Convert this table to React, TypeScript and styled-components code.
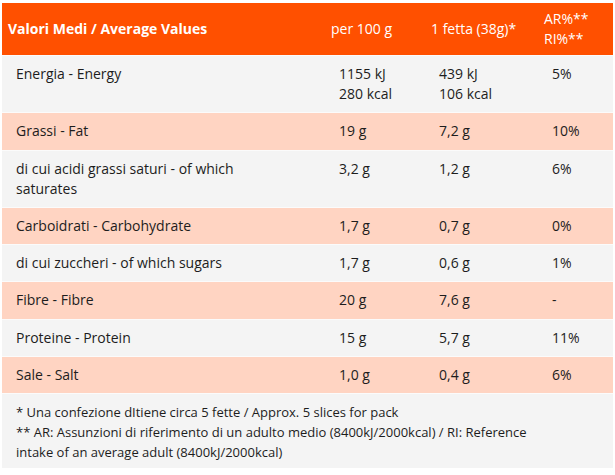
import styled, { createGlobalStyle } from 'styled-components';

const GlobalStyle = createGlobalStyle`
  body {
    margin: 0;
    background: #ffffff;
    font-family: 'Open Sans', 'DejaVu Sans', sans-serif;
    color: #1d1d1d;
  }
`;

interface Row {
  label: string;
  per100: string[];
  slice: string[];
  ar: string;
  tint: boolean;
}

const rows: Row[] = [
  { label: 'Energia - Energy', per100: ['1155 kJ', '280 kcal'], slice: ['439 kJ', '106 kcal'], ar: '5%', tint: false },
  { label: 'Grassi - Fat', per100: ['19 g'], slice: ['7,2 g'], ar: '10%', tint: true },
  { label: 'di cui acidi grassi saturi - of which saturates', per100: ['3,2 g'], slice: ['1,2 g'], ar: '6%', tint: false },
  { label: 'Carboidrati - Carbohydrate', per100: ['1,7 g'], slice: ['0,7 g'], ar: '0%', tint: true },
  { label: 'di cui zuccheri - of which sugars', per100: ['1,7 g'], slice: ['0,6 g'], ar: '1%', tint: false },
  { label: 'Fibre - Fibre', per100: ['20 g'], slice: ['7,6 g'], ar: '-', tint: true },
  { label: 'Proteine - Protein', per100: ['15 g'], slice: ['5,7 g'], ar: '11%', tint: false },
  { label: 'Sale - Salt', per100: ['1,0 g'], slice: ['0,4 g'], ar: '6%', tint: true },
];

const App = () => {
  return (
    <Wrapper>
      <GlobalStyle />
      <Table>
        <colgroup>
          <col style={{ width: 322 }} />
          <col style={{ width: 100 }} />
          <col style={{ width: 113 }} />
          <col style={{ width: 76 }} />
        </colgroup>
        <thead>
          <tr>
            <HeadCell $bold>Valori Medi / Average Values</HeadCell>
            <HeadCell>per 100 g</HeadCell>
            <HeadCell>1 fetta (38g)*</HeadCell>
            <HeadCell>
              AR%**
              <br />
              RI%**
            </HeadCell>
          </tr>
        </thead>
        <tbody>
          {rows.map((r) => (
            <BodyRow key={r.label} $tint={r.tint}>
              <LabelCell>{r.label}</LabelCell>
              <Cell>
                {r.per100.map((v) => (
                  <div key={v}>{v}</div>
                ))}
              </Cell>
              <Cell>
                {r.slice.map((v) => (
                  <div key={v}>{v}</div>
                ))}
              </Cell>
              <Cell>{r.ar}</Cell>
            </BodyRow>
          ))}
        </tbody>
      </Table>
      <Notes>
        <div>* Una confezione dItiene circa 5 fette / Approx. 5 slices for pack</div>
        <div>
          ** AR: Assunzioni di riferimento di un adulto medio (8400kJ/2000kcal) / RI: Reference
          intake of an average adult (8400kJ/2000kcal)
        </div>
      </Notes>
    </Wrapper>
  );
};

export default App;

const Wrapper = styled.div`
  padding: 3px 2px 0 2px;
  width: 611px;
`;

const Table = styled.table`
  width: 611px;
  border-collapse: collapse;
  table-layout: fixed;
  font-size: 14px;
  line-height: 20px;
`;

const HeadCell = styled.th<{ $bold?: boolean }>`
  background: #ff5000;
  color: #ffffff;
  text-align: left;
  font-weight: ${(p) => (p.$bold ? 700 : 400)};
  padding: 6px 7px;
  height: 40px;
  &:first-child {
    padding-left: 6px;
  }
`;

const BodyRow = styled.tr<{ $tint: boolean }>`
  background: ${(p) => (p.$tint ? '#ffd4c2' : '#f4f4f4')};
  border-top: 1px solid #fbfbfb;
`;

const Cell = styled.td`
  vertical-align: top;
  padding: 8px 15px 8.25px 15px;
`;

const LabelCell = styled(Cell)`
  padding-left: 14px;
  padding-right: 60px;
`;

const Notes = styled.div`
  background: #f4f4f4;
  border-top: 1px solid #fbfbfb;
  padding: 8px 75px 6px 14px;
  font-size: 13px;
  line-height: 20px;
  color: #1d1d1d;
`;
